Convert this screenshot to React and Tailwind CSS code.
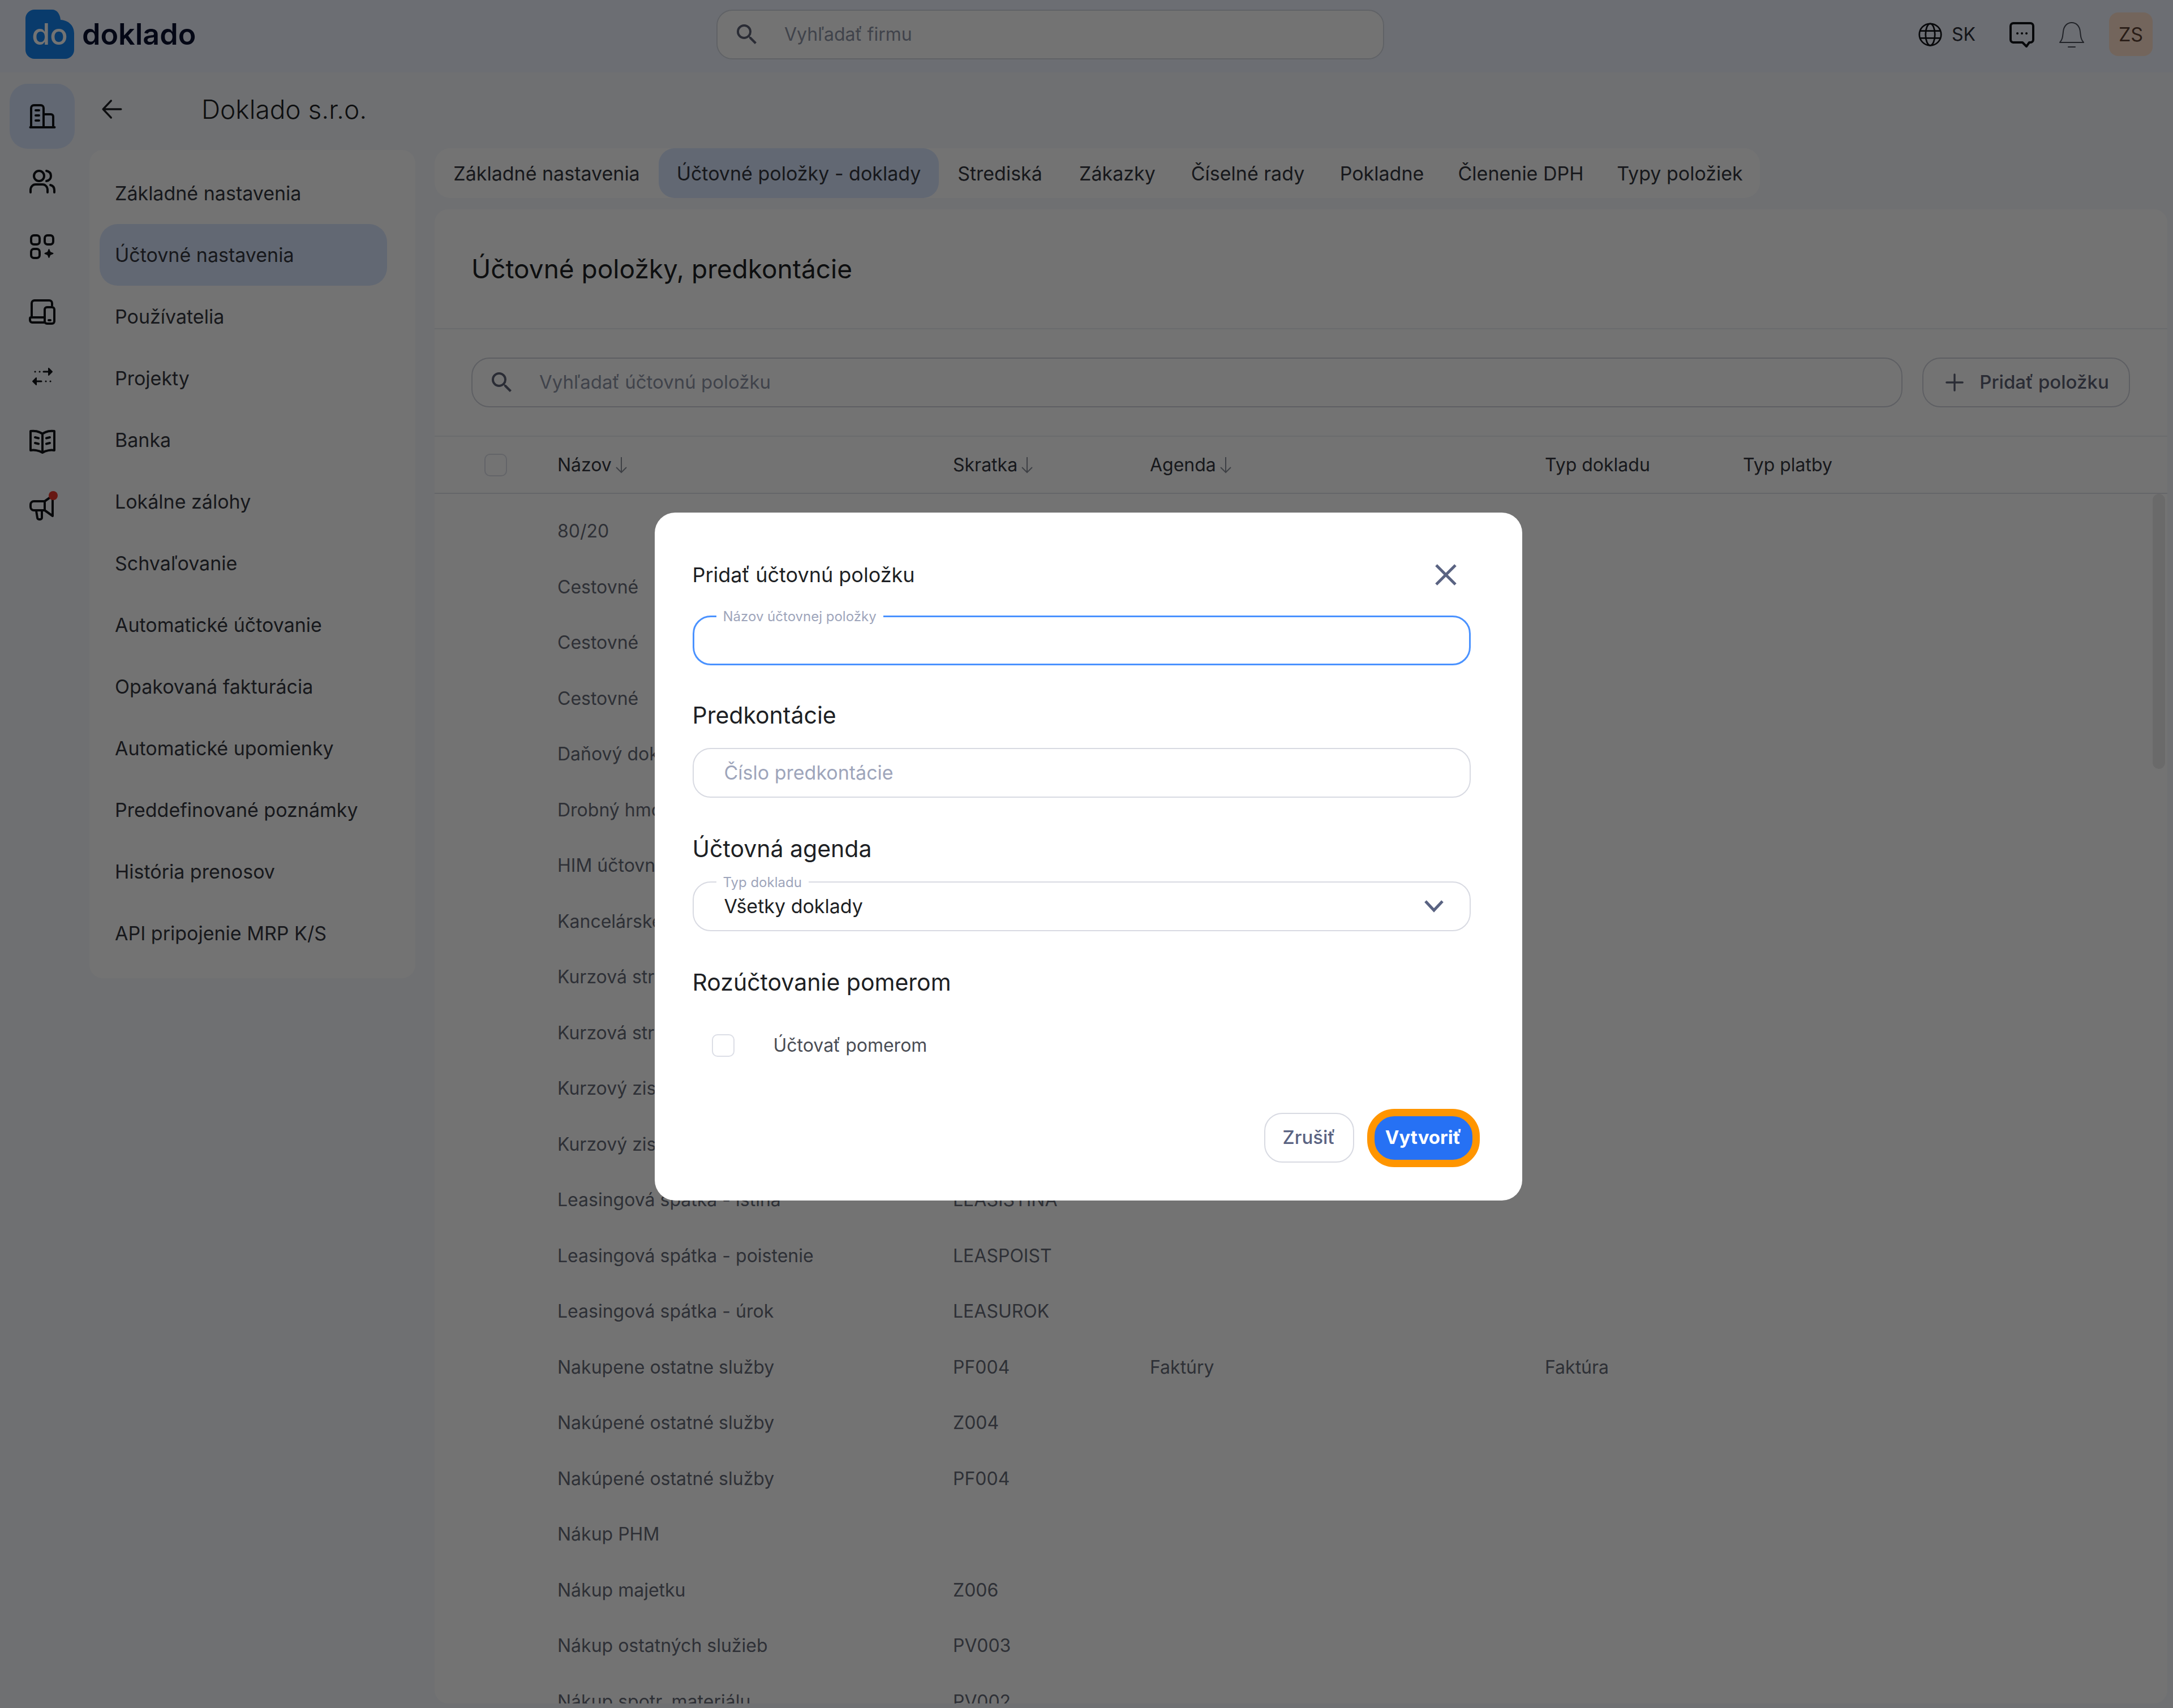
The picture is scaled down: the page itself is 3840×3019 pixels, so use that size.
import React, { useState } from 'react';
import { MdSearch } from 'react-icons/md';

const sideItems = [
  "Základné nastavenia", "Účtovné nastavenia", "Používatelia", "Projekty", "Banka",
  "Lokálne zálohy", "Schvaľovanie", "Automatické účtovanie", "Opakovaná fakturácia",
  "Automatické upomienky", "Preddefinované poznámky", "História prenosov", "API pripojenie MRP K/S",
];

const tabs = [
  "Základné nastavenia", "Účtovné položky - doklady", "Strediská", "Zákazky",
  "Číselné rady", "Pokladne", "Členenie DPH", "Typy položiek",
];

const rows = [
  { name: "80/20" },
  { name: "Cestovné" },
  { name: "Cestovné" },
  { name: "Cestovné" },
  { name: "Daňový doklad" },
  { name: "Drobný hmotný majetok" },
  { name: "HIM účtovný" },
  { name: "Kancelárske potreby" },
  { name: "Kurzová strata" },
  { name: "Kurzová strata" },
  { name: "Kurzový zisk" },
  { name: "Kurzový zisk" },
  { name: "Leasingová spátka - istina", code: "LEASISTINA" },
  { name: "Leasingová spátka - poistenie", code: "LEASPOIST" },
  { name: "Leasingová spátka - úrok", code: "LEASUROK" },
  { name: "Nakupene ostatne služby", code: "PF004", agenda: "Faktúry", doc: "Faktúra" },
  { name: "Nakúpené ostatné služby", code: "Z004" },
  { name: "Nakúpené ostatné služby", code: "PF004" },
  { name: "Nákup PHM" },
  { name: "Nákup majetku", code: "Z006" },
  { name: "Nákup ostatných služieb", code: "PV003" },
  { name: "Nákup spotr. materiálu", code: "PV002" },
];

const Icon = ({ children, className = "size-12", width = 4 }) => (
  <svg viewBox="0 0 48 48" className={className} fill="none" stroke="currentColor" strokeWidth={width} strokeLinecap="round" strokeLinejoin="round" aria-hidden="true">
    {children}
  </svg>
);

const railIcons = [
  {
    label: "Firmy",
    icon: (
      <Icon>
        <path d="M4 43V9a5 5 0 0 1 5-5h12a5 5 0 0 1 5 5v34M26 20h13a4 4 0 0 1 4 4v19M2.500 43h43M12 13h6M12 22h6M12 31h6" />
      </Icon>
    ),
  },
  {
    label: "Kontakty",
    icon: (
      <Icon>
        <circle cx="18" cy="14" r="9" />
        <path d="M3 43v-4c0-6 4-10 9-10h12c5 0 9 4 9 10v4M31 5c5 1 8 4 8 9s-3 8-8 9M38 30c4 1 7 4 7 9v4" />
      </Icon>
    ),
  },
  {
    label: "Aplikácie",
    icon: (
      <Icon>
        <rect x="4" y="4" width="15" height="16" rx="5" />
        <rect x="28" y="4" width="15" height="16" rx="5" />
        <rect x="4" y="28" width="15" height="16" rx="5" />
        <path d="M35.500 29l2 5 5 2-5 2-2 5-2-5-5-2 5-2z" fill="currentColor" strokeWidth="2" />
      </Icon>
    ),
  },
  {
    label: "Zariadenia",
    icon: (
      <Icon>
        <path d="M5 34V9a5 5 0 0 1 5-5h26a5 5 0 0 1 5 5v4M26 34H4a2 2 0 0 0-2 2v3a4 4 0 0 0 4 4h22" />
        <rect x="28" y="16" width="17" height="29" rx="4" />
        <path d="M35 39h3" />
      </Icon>
    ),
  },
  {
    label: "Prevody",
    icon: (
      <Icon width={3}>
        <path d="M11 15h.1M19 15h.1M26 15h13M9 32h13M30 32h.1M38 32h.1" />
        <path d="M35 9l6 6-6 6zM13 26l-6 6 6 6z" fill="currentColor" strokeWidth="2" />
      </Icon>
    ),
  },
  {
    label: "Účtovníctvo",
    icon: (
      <Icon>
        <path d="M24 10C18 5 9 4 3 5v34c6-1 15 0 21 4 6-4 15-5 21-4V5c-6-1-15 0-21 5zM24 10v33M11 16l6 1.500M11 26l6 1.500M37 16l-6 1.500M37 26l-6 1.500" />
      </Icon>
    ),
  },
  {
    label: "Novinky",
    dot: true,
    icon: (
      <Icon>
        <path d="M28 14H9a6 6 0 0 0-6 6v4a6 6 0 0 0 6 6h19zM28 14L42 4v36l-14-10M13 31l2 12a3 3 0 0 0 3 3h2a3 3 0 0 0 3-3V31" />
      </Icon>
    ),
  },
];

const Checkbox = (props) => (
  <input type="checkbox" {...props} className="block size-10 shrink-0 appearance-none rounded-[10px] border-2 border-[#dcdee6] bg-white checked:bg-[#2671f4]" />
);

const SortArrow = () => (
  <svg viewBox="0 0 22 32" className="h-8 w-[22px] text-[#8a8e99]" fill="none" stroke="currentColor" strokeWidth="2" aria-hidden="true">
    <path d="M11 2v27M2 20l9 9 9-9" />
  </svg>
);

const Header = () => (
  <header className="grid h-32 shrink-0 grid-cols-[1266fr_1180fr_1394fr] items-center bg-[#eff4ff] pb-[7px]">
    <a href="#" className="flex items-center gap-[14px] pl-[45px]">
      <span className="relative flex h-[87px] w-[86px] items-center justify-center">
        <svg viewBox="0 0 86 87" className="absolute inset-0 size-full" aria-hidden="true">
          <path d="M16 0h31c9 0 14 8 15 18 14 1 24 10 24 24v29a16 16 0 0 1-16 16H16A16 16 0 0 1 0 71V16A16 16 0 0 1 16 0z" fill="#1484f0" />
        </svg>
        <span className="relative text-[52px] leading-none font-medium text-white">do</span>
      </span>
      <span className="text-[52px] leading-none font-semibold text-[#0b1030]">doklado</span>
    </a>
    <label className="flex h-[88px] items-center rounded-[28px] border-2 border-[#d5d9e2] bg-white pl-7">
      <MdSearch className="size-12 text-[#5e6376]" />
      <input type="search" aria-label="Vyhľadať firmu" placeholder="Vyhľadať firmu" className="ml-[42px] min-w-0 flex-1 bg-transparent text-[32px] outline-none placeholder:text-[#8e94a6]" />
    </label>
    <div className="flex items-center justify-end pr-9">
      <button className="flex items-center gap-4 text-[32px] text-[#2b2e36]">
        <Icon className="size-11 text-[#111318]" width={3}>
          <circle cx="24" cy="24" r="21" />
          <ellipse cx="24" cy="24" rx="9" ry="21" />
          <path d="M5 17h38M5 31h38" />
        </Icon>
        SK
      </button>
      <button aria-label="Správy" className="ml-[58px] text-[#111318]">
        <Icon>
          <path d="M9 4h30a5 5 0 0 1 5 5v24a5 5 0 0 1-5 5h-2l-5 7-7-7H9a5 5 0 0 1-5-5V9a5 5 0 0 1 5-5z" />
          <path d="M16 22h.1M24 22h.1M32 22h.1" />
        </Icon>
      </button>
      <button aria-label="Upozornenia" className="ml-10 text-[#4b4f5a]">
        <Icon width={2}>
          <path d="M3 38c5-5 5-11 6-19C10 9 16 3 24 3s14 6 15 16c1 8 1 14 6 19zM18 46h12" />
        </Icon>
      </button>
      <button className="ml-[42px] size-[77px] rounded-2xl bg-[#ffe1cc] text-[34px] text-[#5c4234]">ZS</button>
    </div>
  </header>
);

const Field = ({ id, label, children }) => (
  <div className="relative">
    {label && (
      <label htmlFor={id} className="absolute -top-[14px] left-[42px] bg-white px-3 text-[24px] leading-8 text-[#9ea5bb]">{label}</label>
    )}
    {children}
  </div>
);

const AddItemDialog = ({ onClose }) => (
  <div className="fixed inset-0 flex items-center justify-center bg-black/55 pt-2 pl-1.5">
    <form role="dialog" aria-labelledby="dialog-title" className="w-[1533px] max-w-full rounded-[36px] bg-white pt-[76px] pr-[91px] pb-[59px] pl-[67px] text-[#1d1f24]">
      <div className="flex h-[68px] items-center justify-between">
        <h2 id="dialog-title" className="text-[36px]">Pridať účtovnú položku</h2>
        <button type="button" aria-label="Zavrieť" onClick={onClose} className="mr-5 text-[#5a6382]">
          <Icon width={5}><path d="M7 7l34 34M41 7L7 41" strokeLinecap="butt" /></Icon>
        </button>
      </div>
      <div className="mt-[38px]">
        <Field id="name" label="Názov účtovnej položky">
          <input id="name" type="text" className="h-[88px] w-full rounded-[32px] border-3 border-[#4a92ff] px-[54px] text-[34px] outline-none" />
        </Field>
      </div>

      <h3 className="mt-[62px] text-[41px] leading-[52px]">Predkontácie</h3>
      <div className="mt-8">
        <Field id="number">
          <input id="number" type="text" aria-label="Číslo predkontácie" placeholder="Číslo predkontácie" className="h-[88px] w-full rounded-[32px] border-2 border-[#d8dae2] px-[54px] text-[34px] outline-none placeholder:text-[#9ea5bb]" />
        </Field>
      </div>

      <h3 className="mt-16 text-[41px] leading-[52px]">Účtovná agenda</h3>
      <div className="mt-8">
        <Field id="doc-type" label="Typ dokladu">
          <select id="doc-type" className="block h-[88px] w-full appearance-none rounded-[32px] border-2 border-[#d8dae2] px-[54px] text-[34px] outline-none">
            <option>Všetky doklady</option>
          </select>
          <svg viewBox="0 0 34 22" className="pointer-events-none absolute top-[33px] right-12 h-[22px] w-[34px]" fill="none" stroke="#5a6382" strokeWidth="5" aria-hidden="true">
            <path d="M2 2l15 16L32 2" />
          </svg>
        </Field>
      </div>

      <h3 className="mt-16 text-[41px] leading-[52px]">Rozúčtovanie pomerom</h3>
      <label className="mt-[66px] flex items-center gap-[69px] pl-[34px] text-[32px] leading-10 text-[#4a4d55]">
        <Checkbox />
        Účtovať pomerom
      </label>

      <div className="-mr-4 mt-[92px] flex items-center justify-end gap-[23px]">
        <button type="button" onClick={onClose} className="h-[88px] w-[159px] rounded-[32px] border-2 border-[#d8dae2] text-[33px] font-medium text-[#5a6382]">Zrušiť</button>
        <button type="submit" className="h-[103px] w-[199px] rounded-[48px] border-[13px] border-[#ff9500] bg-[#2671f4] text-[33px] font-bold text-white">Vytvoriť</button>
      </div>
    </form>
  </div>
);

const App = () => {
  const [open, setOpen] = useState(true);

  return (
    <div className="flex h-screen flex-col overflow-hidden bg-[#f7f9fc] font-['Inter',sans-serif] text-[32px] text-[#34373e]">
      <Header />

      <div className="flex min-h-0 flex-1">
        <nav className="flex w-[158px] shrink-0 flex-col pt-5 pl-[17px]">
          {railIcons.map((item, i) => (
            <a key={item.label} href="#" aria-label={item.label} className={`relative flex size-[115px] items-center justify-center rounded-[32px] text-[#111318] ${i === 0 ? "bg-[#d9e6ff]" : ""}`}>
              {item.icon}
              {item.dot && <span className="absolute top-[30px] right-[30px] size-4 rounded-full bg-[#e5352b]" />}
            </a>
          ))}
        </nav>

        <div className="flex min-w-0 flex-1 flex-col pr-[10px] pb-2">
          <div className="flex h-[134px] shrink-0 items-center gap-[138px] pb-1 pl-5">
            <button aria-label="Späť" className="text-[#1d1f24]">
              <Icon className="size-10"><path d="M43 24H5M22 6L5 24l17 18" /></Icon>
            </button>
            <h1 className="text-[46px] font-light text-[#1d1f24]">Doklado s.r.o.</h1>
          </div>

          <div className="flex min-h-0 flex-1 items-start gap-[34px]">
            {/* Settings menu */}
            <nav className="mt-[3px] w-[576px] shrink-0 rounded-3xl bg-white px-[18px] pt-[22px] pb-[25px]">
              {sideItems.map((item, i) => (
                <a key={item} href="#" className={`flex h-[109px] w-[508px] items-center rounded-[32px] px-[27px] text-[34px] ${i === 1 ? "bg-[#d9e6ff]" : ""}`}>
                  {item}
                </a>
              ))}
            </nav>

            <div className="flex h-full min-w-0 flex-1 flex-col">
              <div className="grid h-[88px] w-fit shrink-0 grid-cols-[396px_495px_216px_199px_262px_212px_279px_283px] rounded-[28px] bg-white text-[34px]">
                {tabs.map((tab, i) => (
                  <button key={tab} className={`rounded-[28px] whitespace-nowrap ${i === 1 ? "bg-[#d9e6ff]" : ""}`}>{tab}</button>
                ))}
              </div>

              <main className="mt-5 flex min-h-0 flex-1 flex-col overflow-hidden rounded-3xl bg-white">
                <div className="flex h-[212px] shrink-0 items-center border-b-2 border-[#eceef2] px-[65px]">
                  <h2 className="text-[46px] text-[#1d1f24]">Účtovné položky, predkontácie</h2>
                </div>

                <div className="flex h-[190px] shrink-0 items-center gap-[35px] border-b-2 border-[#eceef2] pr-[66px] pl-[65px]">
                  <label className="flex h-[88px] flex-1 items-center rounded-[32px] border-2 border-[#d0d3dc] pl-7">
                    <MdSearch className="size-12 text-[#5e6376]" />
                    <input type="search" aria-label="Vyhľadať účtovnú položku" placeholder="Vyhľadať účtovnú položku" className="ml-[42px] min-w-0 flex-1 bg-transparent text-[33px] outline-none placeholder:text-[#8e94a6]" />
                  </label>
                  <button className="flex h-[88px] w-[367px] items-center justify-center gap-6 rounded-[32px] border-2 border-[#d0d3dc] text-[33px] font-medium text-[#5e6376]">
                    <Icon className="size-10"><path d="M24 7v34M7 24h34" /></Icon>
                    Pridať položku
                  </button>
                </div>

                <div className="relative min-h-0 flex-1 overflow-hidden">
                  <table className="w-full table-fixed text-left">
                    <colgroup>
                      <col className="w-[217px]" />
                      <col className="w-[699px]" />
                      <col className="w-[348px]" />
                      <col className="w-[698px]" />
                      <col className="w-[350px]" />
                      <col />
                    </colgroup>
                    <thead>
                      <tr className="h-[100px] border-b-2 border-[#e0e3e9]">
                        <th className="pl-[88px]"><Checkbox aria-label="Vybrať všetko" /></th>
                        <th className="font-normal"><span className="flex items-center gap-1.5">Názov <SortArrow /></span></th>
                        <th className="font-normal"><span className="flex items-center gap-1.5">Skratka <SortArrow /></span></th>
                        <th className="font-normal"><span className="flex items-center gap-1.5">Agenda <SortArrow /></span></th>
                        <th className="font-normal">Typ dokladu</th>
                        <th className="font-normal">Typ platby</th>
                      </tr>
                    </thead>
                    <tbody className="text-[#666b78] before:block before:h-[17px]">
                      {rows.map((row, i) => (
                        <tr key={i} className="odd:h-[98px] even:h-[99px]">
                          <td></td>
                          <td>{row.name}</td>
                          <td>{row.code}</td>
                          <td>{row.agenda}</td>
                          <td>{row.doc}</td>
                          <td></td>
                        </tr>
                      ))}
                    </tbody>
                  </table>
                  <span className="absolute top-[101px] right-1 h-[486px] w-[22px] rounded-full bg-[#ebebeb]" />
                </div>
              </main>
            </div>
          </div>
        </div>
      </div>

      {open && <AddItemDialog onClose={() => setOpen(false)} />}
    </div>
  );
};

export default App;
